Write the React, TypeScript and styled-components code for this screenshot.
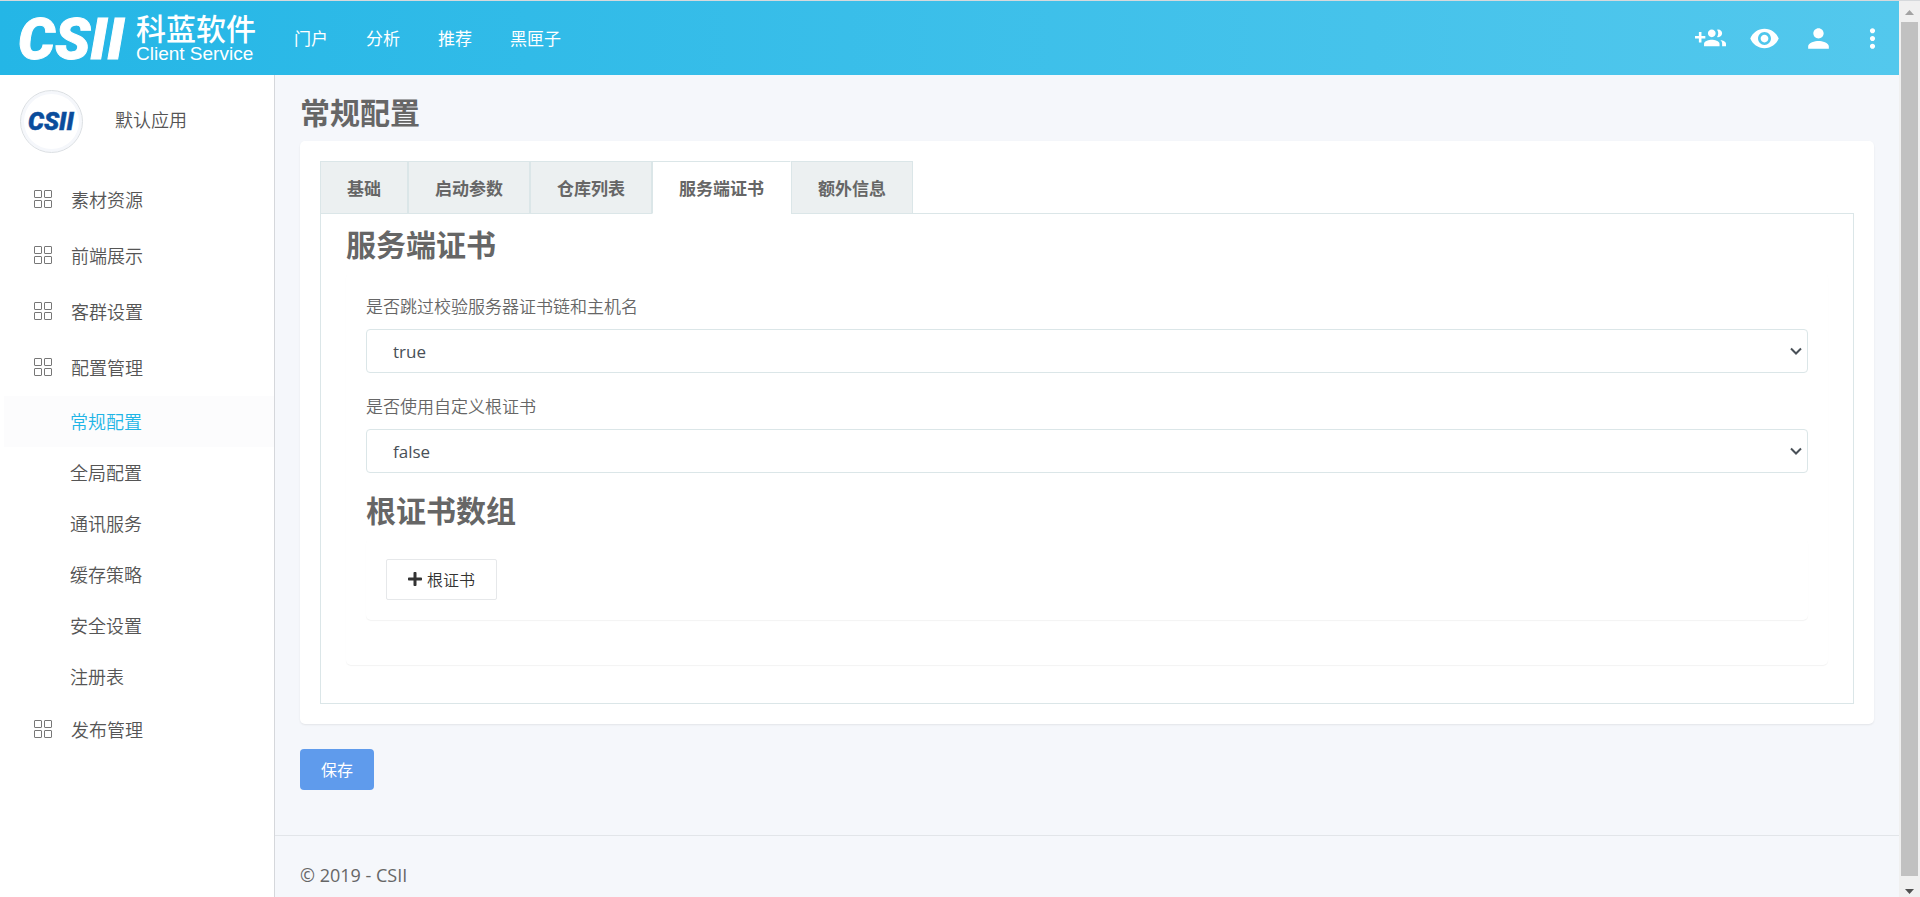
import React from "react";
import styled, { createGlobalStyle } from "styled-components";
import { MdVisibility, MdPerson, MdMoreVert } from "react-icons/md";
import { FaPlus } from "react-icons/fa";

const GlobalStyle = createGlobalStyle`
  * { box-sizing: border-box; }
  body {
    margin: 0;
    background: #f5f7fb;
    color: #666;
    font-family: "Open Sans", "Noto Sans CJK SC", sans-serif;
    font-size: 17px;
    line-height: 28px;
  }
  h1, h2, h3, ul { margin: 0; padding: 0; }
  ul { list-style: none; }
  a { color: inherit; text-decoration: none; }
  button, select { font-family: inherit; }
`;

const cjk = `"Noto Sans CJK SC", sans-serif`;

const Window = styled.div`
  display: grid;
  grid-template-columns: 1fr 21px;
  min-height: 100vh;
  border-top: 1px solid #d6d9dc;
`;

const Page = styled.div`
  display: flex;
  flex-direction: column;
  min-width: 0;
`;

const Header = styled.header`
  display: flex;
  align-items: center;
  height: 74px;
  padding: 0 11px 0 16px;
  color: #fff;
  background: linear-gradient(to right, #24b6e6, #53c8ed);
`;

const Brand = styled.a`
  display: flex;
  margin-right: 33px;
`;

const Nav = styled.nav`
  display: flex;
  gap: 38px;
  font-family: ${cjk};
`;

const Actions = styled.div`
  display: flex;
  gap: 23px;
  margin-left: auto;
`;

const IconButton = styled.button`
  display: flex;
  padding: 0;
  border: 0;
  background: none;
  color: #fff;
  font-size: 31px;
`;

const Body = styled.div`
  display: flex;
  flex: 1;
`;

const Sidebar = styled.aside`
  flex: 0 0 275px;
  background: #fff;
  border-right: 1px solid #d5d7db;
  font-family: ${cjk};
  font-size: 18px;
  font-weight: 350;
  color: #555;
`;

const AppInfo = styled.div`
  display: flex;
  align-items: center;
  gap: 32px;
  height: 97px;
  padding: 0 20px 5px;
`;

const AppName = styled.span`
  padding-bottom: 5px;
`;

const Avatar = styled.div`
  display: flex;
  align-items: center;
  justify-content: center;
  width: 63px;
  height: 63px;
  border: 1px solid #dbdfe3;
  border-radius: 50%;
  box-shadow: inset 0 0 0 3px #f5f7fb;
`;

const MenuLink = styled.a`
  display: flex;
  align-items: center;
  gap: 18px;
  height: 56px;
  padding: 0 0 2px 33px;
`;

const SubLink = styled.a<{ $active?: boolean }>`
  display: flex;
  align-items: center;
  height: 51px;
  margin-left: 4px;
  padding: 0 0 1px 66px;
  color: ${(p) => (p.$active ? "#1fb5e6" : "inherit")};
  background: ${(p) => (p.$active ? "#fcfcfd" : "transparent")};
`;

const Content = styled.div`
  display: flex;
  flex: 1;
  flex-direction: column;
  min-width: 0;
`;

const Main = styled.main`
  flex: 1;
  padding: 20px 25px 45px;
`;

const Title = styled.h1`
  margin-bottom: 14px;
  font-family: ${cjk};
  font-size: 30px;
  line-height: 32px;
`;

const Card = styled.section`
  margin-bottom: 25px;
  padding: 20px;
  background: #fff;
  border-radius: 5px;
  box-shadow: 0 1px 2px rgba(0, 0, 0, 0.08);
`;

const InnerCard = styled(Card)`
  box-shadow: 0 1px 1px rgba(0, 0, 0, 0.05);
`;

const Tabs = styled.div`
  position: relative;
  display: flex;
`;

const Tab = styled.button<{ $active?: boolean }>`
  height: 53px;
  padding: 0 26px;
  border: 1px solid #dbe6e8;
  border-right-color: ${(p) => (p.$active ? "#fff" : "#dbe6e8")};
  border-bottom-color: ${(p) => (p.$active ? "#fff" : "#dbe6e8")};
  background: ${(p) => (p.$active ? "#fff" : "#ecf0f1")};
  color: #666;
  font-family: ${cjk};
  font-size: 17px;
  font-weight: 700;
`;

const Panel = styled.div`
  margin-top: -1px;
  padding: 13px 25px;
  border: 1px solid #dbe6e8;
`;

const Field = styled.div`
  display: flex;
  flex-direction: column;
  gap: 10px;
  margin-bottom: 20px;
`;

const Label = styled.label`
  font-family: ${cjk};
  font-weight: 350;
  line-height: 26px;
`;

const SelectBox = styled.div`
  position: relative;
`;

const Select = styled.select`
  display: block;
  width: 100%;
  height: 44px;
  padding: 0 26px;
  border: 1px solid #dbe6e8;
  border-radius: 4px;
  background: #fff;
  color: #495057;
  font-size: 17px;
  appearance: none;
`;

const Chevron = styled.svg`
  position: absolute;
  top: 18px;
  right: 6px;
  pointer-events: none;
`;

const AddButton = styled.button`
  display: flex;
  align-items: center;
  gap: 4px;
  height: 41px;
  padding: 0 21px 2px 20px;
  border: 1px solid #e6e8ea;
  border-radius: 2px;
  background: #fff;
  color: #333;
  font-family: ${cjk};
  font-size: 16px;
  font-weight: 350;
`;

const SaveButton = styled.button`
  height: 41px;
  padding: 0 21px 2px;
  border: 0;
  border-radius: 4px;
  background: #5f9bec;
  color: #fff;
  font-family: ${cjk};
  font-size: 16px;
`;

const Footer = styled.footer`
  padding: 25px 25px 8px;
  border-top: 1px solid #e2e5e9;
  font-size: 18px;
`;

const ScrollTrack = styled.div`
  display: flex;
  flex-direction: column;
  align-items: center;
  justify-content: space-between;
  background: #f0f0f0;
`;

const ScrollThumb = styled.div`
  flex: 1;
  width: 17px;
  background: #c1c1c1;
`;

const ScrollArrow = styled.svg`
  display: block;
  width: 17px;
  height: 21px;
`;

const LogoMark = styled.text`
  font-family: Roboto, sans-serif;
  font-weight: 900;
  font-style: italic;
`;

const GridIcon = () => (
  <svg width="20" height="20" viewBox="0 0 20 20" fill="none" stroke="#777" aria-hidden="true">
    <rect x="1.5" y="1.5" width="7" height="7" rx="0.5" />
    <rect x="11.5" y="1.5" width="7" height="7" rx="0.5" />
    <rect x="1.5" y="11.5" width="7" height="7" rx="0.5" />
    <rect x="11.5" y="11.5" width="7" height="7" rx="0.5" />
  </svg>
);

const GroupAddIcon = () => (
  <svg width="31" height="31" viewBox="0 0 24 24" fill="currentColor" aria-hidden="true">
    <path d="M8 10H5V7H3v3H0v2h3v3h2v-3h3v-2zm10 1c1.66 0 2.99-1.34 2.99-3S19.66 5 18 5c-.32 0-.63.05-.91.14.57.81.9 1.79.9 2.86s-.34 2.04-.9 2.86c.28.09.59.14.91.14zm-5 0c1.66 0 2.99-1.34 2.99-3S14.66 5 13 5c-1.66 0-3 1.34-3 3s1.34 3 3 3zm6.62 2.16c.83.73 1.38 1.66 1.38 2.84v2h3v-2c0-1.54-2.37-2.49-4.38-2.84zM13 13c-2 0-6 1-6 3v2h12v-2c0-2-4-3-6-3z" />
  </svg>
);

const Logo = () => (
  <svg width="245" height="70" viewBox="0 0 245 70" fill="#fff" role="img" aria-label="CSII 科蓝软件">
    <LogoMark x="2" y="56" fontSize="58" stroke="#fff" strokeWidth="1">CSII</LogoMark>
    <text x="120" y="37" fontSize="30" fontWeight="500" fontFamily="Noto Sans CJK SC">科蓝软件</text>
    <text x="120" y="57" fontSize="19" fontFamily="Liberation Sans">Client Service</text>
  </svg>
);

const AvatarLogo = () => (
  <svg width="57" height="36" viewBox="0 0 57 36" fill="#0a4c9c" aria-hidden="true">
    <LogoMark x="5" y="27" fontSize="25" stroke="#0a4c9c" strokeWidth="0.5">CSII</LogoMark>
  </svg>
);

const navItems = ["门户", "分析", "推荐", "黑匣子"];
const subItems = ["常规配置", "全局配置", "通讯服务", "缓存策略", "安全设置", "注册表"];
const menu: { label: string; children?: string[] }[] = [
  { label: "素材资源" },
  { label: "前端展示" },
  { label: "客群设置" },
  { label: "配置管理", children: subItems },
  { label: "发布管理" },
];
const tabs = ["基础", "启动参数", "仓库列表", "服务端证书", "额外信息"];
const actions = [
  { name: "添加用户", Icon: GroupAddIcon },
  { name: "预览", Icon: MdVisibility },
  { name: "账户", Icon: MdPerson },
  { name: "更多", Icon: MdMoreVert },
];

function BooleanField({ id, label, value }: { id: string; label: string; value: string }) {
  return (
    <Field>
      <Label htmlFor={id}>{label}</Label>
      <SelectBox>
        <Select id={id} defaultValue={value}>
          <option>true</option>
          <option>false</option>
        </Select>
        <Chevron width="12" height="9" viewBox="0 0 12 9" fill="none" stroke="#495057" strokeWidth="2" aria-hidden="true">
          <path d="M1 1.500 6 6.500 11 1.500" />
        </Chevron>
      </SelectBox>
    </Field>
  );
}

export default function App() {
  return (
    <>
      <GlobalStyle />
      <Window>
        <Page>
          <Header>
            <Brand href="#">
              <Logo />
            </Brand>
            <Nav>
              {navItems.map((item) => (
                <a href="#" key={item}>{item}</a>
              ))}
            </Nav>
            <Actions>
              {actions.map(({ name, Icon }) => (
                <IconButton key={name} type="button" aria-label={name}>
                  <Icon />
                </IconButton>
              ))}
            </Actions>
          </Header>
          <Body>
            <Sidebar>
              <AppInfo>
                <Avatar>
                  <AvatarLogo />
                </Avatar>
                <AppName>默认应用</AppName>
              </AppInfo>
              <ul>
                {menu.map(({ label, children }) => (
                  <li key={label}>
                    <MenuLink href="#">
                      <GridIcon />
                      {label}
                    </MenuLink>
                    {children && (
                      <ul>
                        {children.map((child) => (
                          <li key={child}>
                            <SubLink href="#" $active={child === "常规配置"}>{child}</SubLink>
                          </li>
                        ))}
                      </ul>
                    )}
                  </li>
                ))}
              </ul>
            </Sidebar>
            <Content>
              <Main>
                <Title>常规配置</Title>
                <Card>
                  <Tabs role="tablist">
                    {tabs.map((tab) => (
                      <Tab
                        key={tab}
                        type="button"
                        role="tab"
                        aria-selected={tab === "服务端证书"}
                        $active={tab === "服务端证书"}
                      >
                        {tab}
                      </Tab>
                    ))}
                  </Tabs>
                  <Panel role="tabpanel">
                    <Title as="h2">服务端证书</Title>
                    <InnerCard>
                      <BooleanField id="skip-verify" label="是否跳过校验服务器证书链和主机名" value="true" />
                      <BooleanField id="custom-root" label="是否使用自定义根证书" value="false" />
                      <Title as="h3">根证书数组</Title>
                      <InnerCard>
                        <AddButton type="button">
                          <FaPlus />
                          根证书
                        </AddButton>
                      </InnerCard>
                    </InnerCard>
                  </Panel>
                </Card>
                <SaveButton type="button">保存</SaveButton>
              </Main>
              <Footer>© 2019 - CSII</Footer>
            </Content>
          </Body>
        </Page>
        <ScrollTrack aria-hidden="true">
          <ScrollArrow viewBox="0 0 17 21" fill="#a3a3a3">
            <path d="M4 14 8.500 9 13 14Z" />
          </ScrollArrow>
          <ScrollThumb />
          <ScrollArrow viewBox="0 0 17 21" fill="#505050">
            <path d="M4 13 8.500 18 13 13Z" />
          </ScrollArrow>
        </ScrollTrack>
      </Window>
    </>
  );
}
